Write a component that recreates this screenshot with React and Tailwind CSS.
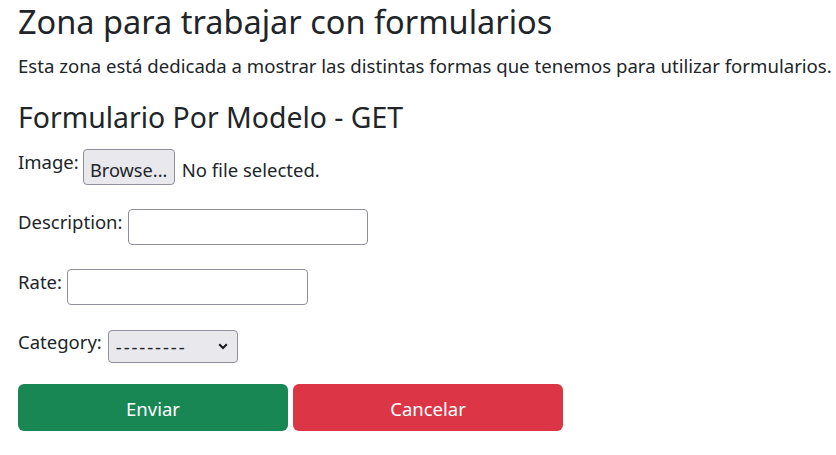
import React from "react";

export default function App() {
  const font = { fontFamily: '"Noto Sans", "Open Sans", sans-serif' };
  return (
    <div className="bg-white min-h-[455px] w-[836px] text-[#212529] px-[18px] pt-0" style={font}>
      <h1 className="text-[32.5px] leading-[44px] font-normal m-0 whitespace-nowrap">Zona para trabajar con formularios</h1>
      <p className="text-[18.6px] leading-[26px] mt-[9px] whitespace-nowrap">Esta zona está dedicada a mostrar las distintas formas que tenemos para utilizar formularios.</p>
      <h3 className="text-[28.4px] leading-[34px] font-normal mt-[21px] whitespace-nowrap">Formulario Por Modelo - GET</h3>
      <form className="mt-[15px]">
        <div className="flex items-start h-[36px]">
          <label className="text-[18.5px] leading-[22px] pt-[2px]">Image:</label>
          <div className="ml-[4px] h-[36px] w-[92px] pt-[9px] text-center border border-[#8f8f9d] bg-[#e9e9ed] rounded-[4px] text-[18.2px] leading-[22px]">Browse...</div>
          <span className="ml-[7px] text-[18.5px] leading-[22px] pt-[10px]">No file selected.</span>
        </div>
        <div className="flex items-start mt-[24px] h-[36px]">
          <label className="text-[18.5px] leading-[22px] pt-[2px]">Description:</label>
          <div className="ml-[5px] w-[240px] h-[36px] border border-[#8f8f9d] rounded-[4px] bg-white"></div>
        </div>
        <div className="flex items-start mt-[24px] h-[36px]">
          <label className="text-[18.5px] leading-[22px] pt-[2px]">Rate:</label>
          <div className="ml-[5px] w-[241px] h-[36px] border border-[#8f8f9d] rounded-[4px] bg-white"></div>
        </div>
        <div className="flex items-start mt-[25px] h-[33px]">
          <label className="text-[18.5px] leading-[22px] pt-[1px]">Category:</label>
          <div className="ml-[6px] w-[130px] h-[33px] border border-[#8f8f9d] rounded-[4px] bg-[#e9e9ed] flex items-center justify-between pl-[7px] pr-[9px]">
            <span className="text-[18.5px] leading-[22px] tracking-[1.9px]">---------</span>
            <svg width="10" height="7" viewBox="0 0 10 7"><path d="M1.2 1.2 L5 5 L8.8 1.2" fill="none" stroke="#1b1b1b" strokeWidth="2" /></svg>
          </div>
        </div>
        <div className="flex gap-[5px] mt-[21px]">
          <button type="button" className="w-[270px] h-[47px] pt-[2px] rounded-[6px] bg-[#198754] text-white text-[18.5px]">Enviar</button>
          <button type="button" className="w-[270px] h-[47px] pt-[2px] rounded-[6px] bg-[#dc3545] text-white text-[18.5px]">Cancelar</button>
        </div>
      </form>
    </div>
  );
}
